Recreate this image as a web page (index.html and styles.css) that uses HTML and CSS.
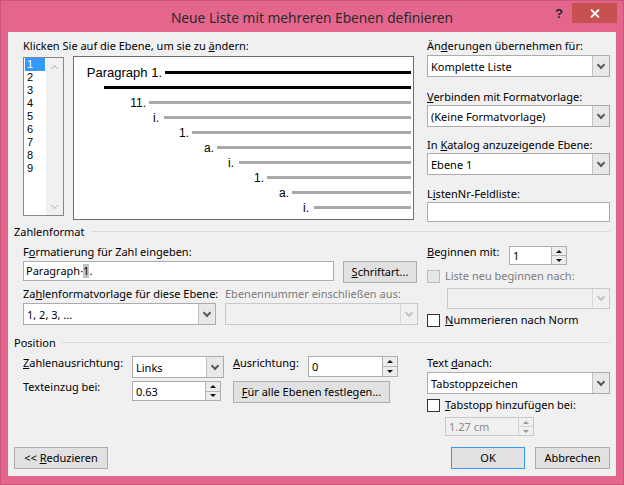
FILE: index.html
```html
<!DOCTYPE html>
<html lang="de">
<head>
<meta charset="utf-8">
<title>Neue Liste mit mehreren Ebenen definieren</title>
<link rel="stylesheet" href="styles.css">
</head>
<body>
<div class="window">
  <header class="titlebar">
    <div class="tb-spacer"></div>
    <div class="title">Neue Liste mit mehreren Ebenen definieren</div>
    <div class="tb-buttons">
      <span class="help">?</span>
      <span class="close"><svg width="10" height="9" viewBox="0 0 10 9"><path d="M1 0.5 L9 8.5 M9 0.5 L1 8.5" stroke="#fff" stroke-width="1.8" fill="none"/></svg></span>
    </div>
  </header>

  <main class="client">
    <section class="sec-top">
      <div class="top-left">
        <div class="lbl">Klicken Sie auf die Ebene, um sie zu <u>ä</u>ndern:</div>
        <div class="top-row">
          <div class="levels">
            <ul class="level-items">
              <li class="sel">1</li><li>2</li><li>3</li><li>4</li><li>5</li><li>6</li><li>7</li><li>8</li><li>9</li>
            </ul>
            <div class="vscroll">
              <span class="arr up"></span>
              <span class="arr down"></span>
            </div>
          </div>
          <div class="preview">
            <div class="prow p1"><span class="num">Paragraph 1.</span><span class="ln dark"></span></div>
            <div class="prow p2"><span class="num"></span><span class="ln dark"></span></div>
            <div class="prow p3"><span class="num">11.</span><span class="ln"></span></div>
            <div class="prow p4"><span class="num">i.</span><span class="ln"></span></div>
            <div class="prow p5"><span class="num">1.</span><span class="ln"></span></div>
            <div class="prow p6"><span class="num">a.</span><span class="ln"></span></div>
            <div class="prow p7"><span class="num">i.</span><span class="ln"></span></div>
            <div class="prow p8"><span class="num">1.</span><span class="ln"></span></div>
            <div class="prow p9"><span class="num">a.</span><span class="ln"></span></div>
            <div class="prow p10"><span class="num">i.</span><span class="ln"></span></div>
          </div>
        </div>
      </div>

      <div class="top-right">
        <div class="lbl">Än<u>d</u>erungen übernehmen für:</div>
        <div class="combo gap-after-label-2"><span class="val">Komplette Liste</span><span class="drop"></span></div>
        <div class="lbl gap-13"><u>V</u>erbinden mit Formatvorlage:</div>
        <div class="combo gap-after-label"><span class="val">(Keine Formatvorlage)</span><span class="drop"></span></div>
        <div class="lbl gap-11">In <u>K</u>atalog anzuzeigende Ebene:</div>
        <div class="combo gap-after-label"><span class="val">Ebene 1</span><span class="drop"></span></div>
        <div class="lbl gap-12">L<u>i</u>stenNr-Feldliste:</div>
        <div class="textbox tb-full gap-after-label"></div>
      </div>
    </section>

    <div class="group-head head-zf"><span class="gt">Zahlenformat</span><span class="rule"></span></div>

    <section class="sec-zf">
      <div class="zf-left">
        <div class="lbl gap-6">F<u>o</u>rmatierung für Zahl eingeben:</div>
        <div class="ctl-row gap-2">
          <div class="textbox tb-format"><span>Paragraph·</span><span class="field">1</span><span>.</span></div>
          <div class="btn btn-font"><span><u>S</u>chriftart...</span></div>
        </div>
        <div class="lbl-row gap-4">
          <span class="lbl lbl-style">Za<u>h</u>lenformatvorlage für diese Ebene:</span>
          <span class="lbl disabled-text">Ebenennummer einschließen aus:</span>
        </div>
        <div class="ctl-row gap-2">
          <div class="combo combo-style"><span class="val">1, 2, 3, ...</span><span class="drop"></span></div>
          <div class="combo combo-include disabled"><span class="val"></span><span class="drop"></span></div>
        </div>
      </div>

      <div class="zf-right">
        <div class="spin-row gap-6">
          <span class="lbl lbl-start"><u>B</u>eginnen mit:</span>
          <div class="spin spin-start"><span class="val">1</span><span class="sbtns"><span class="sb"><i class="tri up"></i></span><span class="sb"><i class="tri down"></i></span></span></div>
        </div>
        <div class="check-row gap-4">
          <span class="cb disabled"></span><span class="lbl cb-lbl disabled-text">Liste neu beginnen nach:</span>
        </div>
        <div class="combo combo-restart disabled"><span class="val"></span><span class="drop"></span></div>
        <div class="check-row gap-4">
          <span class="cb"></span><span class="lbl cb-lbl"><u>N</u>ummerieren nach Norm</span>
        </div>
      </div>
    </section>

    <div class="group-head head-pos"><span class="gt">Position</span><span class="rule"></span></div>

    <section class="sec-pos">
      <div class="pos-grid">
        <span class="lbl"><u>Z</u>ahlenausrichtung:</span>
        <div class="combo combo-align"><span class="val">Links</span><span class="drop"></span></div>
        <span class="lbl"><u>A</u>usrichtung:</span>
        <div class="spin spin-align"><span class="val">0</span><span class="sbtns"><span class="sb"><i class="tri up"></i></span><span class="sb"><i class="tri down"></i></span></span></div>

        <span class="lbl">Texteinzu<u>g</u> bei:</span>
        <div class="spin spin-indent"><span class="val">0.63</span><span class="sbtns"><span class="sb"><i class="tri up"></i></span><span class="sb"><i class="tri down"></i></span></span></div>
        <div class="btn btn-all"><span><u>F</u>ür alle Ebenen festlegen...</span></div>
      </div>

      <div class="pos-right">
        <div class="lbl gap-6">Text <u>d</u>anach:</div>
        <div class="combo gap-2"><span class="val">Tabstoppzeichen</span><span class="drop"></span></div>
        <div class="check-row gap-4">
          <span class="cb"></span><span class="lbl cb-lbl"><u>T</u>abstopp hinzufügen bei:</span>
        </div>
        <div class="spin spin-tab disabled"><span class="val">1.27 cm</span><span class="sbtns"><span class="sb"><i class="tri up"></i></span><span class="sb"><i class="tri down"></i></span></span></div>
      </div>
    </section>

    <footer class="footer">
      <div class="btn btn-less"><span>&lt;&lt; <u>R</u>eduzieren</span></div>
      <div class="btn btn-ok default"><span>OK</span></div>
      <div class="btn btn-cancel"><span>Abbrechen</span></div>
    </footer>
  </main>
</div>
</body>
</html>
```

FILE: styles.css
```css
* { box-sizing: border-box; }
html, body { margin: 0; padding: 0; }
body {
  width: 624px;
  height: 485px;
  overflow: hidden;
  background: #e4668d;
  font-family: "Noto Sans", "Open Sans", sans-serif;
  font-size: 11px;
  color: #000;
}
u { text-decoration: underline; text-underline-offset: 1px; }

.window {
  width: 624px;
  height: 485px;
  border: 1px solid #c9577c;
  background: #e4668d;
  display: flex;
  flex-direction: column;
}

/* ---------- title bar ---------- */
.titlebar {
  height: 31px;
  flex: none;
  display: grid;
  grid-template-columns: 1fr auto 1fr;
  align-items: start;
}
.title {
  padding-top: 8px;
  font-size: 13.75px;
  line-height: 18px;
  color: #2b2b2b;
  white-space: nowrap;
}
.tb-buttons {
  display: flex;
  justify-content: flex-end;
  align-items: flex-start;
  padding-right: 6px;
}
.help {
  width: 26px;
  height: 20px;
  margin-top: 2px;
  display: flex;
  align-items: center;
  justify-content: center;
  font-family: "Liberation Sans", Arial, sans-serif;
  font-weight: bold;
  font-size: 13px;
  color: #262626;
}
.close {
  width: 45px;
  height: 20px;
  margin-top: 2px;
  background: #c75050;
  display: flex;
  align-items: center;
  justify-content: center;
}

/* ---------- client ---------- */
.client {
  margin: 0 7px;
  height: 444px;
  background: #f0f0f0;
  display: flex;
  flex-direction: column;
}

.lbl {
  display: block;
  height: 14px;
  line-height: 14px;
  white-space: nowrap;
}
.disabled-text { color: #7c7c7c; }

.gap-2 { margin-top: 2px; }
.gap-4 { margin-top: 4px; }
.gap-6 { margin-top: 6px; }
.gap-11 { margin-top: 11px; }
.gap-12 { margin-top: 12px; }
.gap-13 { margin-top: 13px; }
.gap-after-label { margin-top: 1px; }
.gap-after-label-2 { margin-top: 2px; }

/* ---------- controls ---------- */
.combo {
  display: flex;
  height: 22px;
  border: 1px solid #acacac;
  background: #fff;
}
.combo .val {
  flex: 1;
  padding: 1px 0 0 3px;
  display: flex;
  align-items: center;
  line-height: 14px;
  white-space: nowrap;
  overflow: hidden;
}
.combo .drop {
  width: 17px;
  flex: none;
  background: #e8e8e8;
  border-left: 1px solid #c3c3c3;
  display: flex;
  align-items: center;
  justify-content: center;
}
.combo .drop::after {
  content: "";
  width: 4px;
  height: 4px;
  border-right: 2px solid #5a5a5a;
  border-bottom: 2px solid #5a5a5a;
  transform: rotate(45deg);
  margin-top: -3px;
}
.combo.disabled { background: #f0f0f0; border-color: #cacaca; }
.combo.disabled .drop { background: #f0f0f0; border-left-color: #d8d8d8; }
.combo.disabled .drop::after { border-color: #c4c4c4; }

.textbox {
  height: 20px;
  border: 1px solid #abadb3;
  background: #fff;
  display: flex;
  align-items: center;
  padding-left: 2px;
  line-height: 14px;
  white-space: nowrap;
}
.tb-full { width: 183px; }
.tb-format { width: 311px; }
.textbox .field { background: #c3c3c3; }

.spin {
  display: flex;
  border: 1px solid #abadb3;
  background: #fff;
}
.spin .val {
  flex: 1;
  padding: 1px 0 0 3px;
  display: flex;
  align-items: center;
  line-height: 14px;
  white-space: nowrap;
}
.spin .sbtns {
  width: 15px;
  flex: none;
  display: flex;
  flex-direction: column;
  border-left: 1px solid #b5b5b5;
}
.spin .sb {
  flex: 1;
  display: flex;
  align-items: center;
  justify-content: center;
  background: #ececec;
}
.spin .sb + .sb { border-top: 1px solid #b5b5b5; }
.tri {
  display: block;
  width: 0;
  height: 0;
  border-left: 3px solid transparent;
  border-right: 3px solid transparent;
}
.tri.up { border-bottom: 3px solid #111; }
.tri.down { border-top: 3px solid #111; }
.spin.disabled { background: #f0f0f0; border-color: #c8c8c8; color: #8a8a8a; }
.spin.disabled .sbtns { border-left-color: #d4d4d4; }
.spin.disabled .sb { background: #f0f0f0; }
.spin.disabled .sb + .sb { border-top-color: #d4d4d4; }
.spin.disabled .tri.up { border-bottom-color: #9a9a9a; }
.spin.disabled .tri.down { border-top-color: #9a9a9a; }

.btn {
  height: 22px;
  border: 1px solid #adadad;
  background: #e1e1e1;
  display: flex;
  align-items: center;
  justify-content: center;
  line-height: 14px;
  white-space: nowrap;
}
.btn.default { border-color: #3399ff; }

.cb {
  width: 13px;
  height: 13px;
  flex: none;
  border: 1px solid #333;
  background: #fff;
}
.cb.disabled { border-color: #bcbcbc; background: #e6e6e6; }

/* ---------- top section ---------- */
.sec-top {
  height: 190px;
  flex: none;
  display: flex;
  padding: 7px 0 0 15px;
}
.top-left { width: 391px; }
.top-right { width: 183px; margin-left: 13px; }
.top-row {
  display: flex;
  align-items: flex-start;
  gap: 9px;
  margin-top: 3px;
}
.levels {
  width: 41px;
  height: 159px;
  margin-top: 1px;
  border: 1px solid #828790;
  background: #fff;
  display: flex;
}
.level-items {
  list-style: none;
  margin: 0;
  padding: 0 1px;
  width: 22px;
}
.level-items li {
  height: 13px;
  line-height: 13px;
  padding-left: 2px;
  font-family: "Liberation Sans", Arial, sans-serif;
  font-size: 11px;
}
.level-items li.sel { background: #3399ff; color: #fff; }
.vscroll {
  width: 17px;
  background: #f0f0f0;
  display: flex;
  flex-direction: column;
  justify-content: space-between;
}
.vscroll .arr {
  height: 17px;
  display: flex;
  align-items: center;
  justify-content: center;
}
.vscroll .arr::after {
  content: "";
  width: 4px;
  height: 4px;
  border-right: 1.5px solid #c2c2c2;
  border-bottom: 1.5px solid #c2c2c2;
}
.vscroll .arr.up::after { transform: rotate(225deg); margin-top: 3px; }
.vscroll .arr.down::after { transform: rotate(45deg); margin-top: -3px; }

.preview {
  width: 341px;
  height: 164px;
  border: 1px solid #6e6e6e;
  background: #fff;
  padding: 8px 2px 0 0;
}
.prow {
  display: flex;
  align-items: center;
  height: 15px;
}
.prow .num {
  flex: none;
  text-align: right;
  padding-right: 3px;
  font-family: "Liberation Sans", Arial, sans-serif;
  font-size: 12px;
  white-space: nowrap;
}
.prow .ln { flex: 1; height: 3px; background: #a9a9a9; }
.prow .ln.dark { background: #000; }
.p1 .num { width: 91px; font-size: 13px; }
.p2 .num { width: 30px; }
.p3 .num { width: 75px; }
.p4 .num { width: 90px; padding-right: 5px; }
.p5 .num { width: 118px; }
.p6 .num { width: 143px; }
.p7 .num { width: 165px; padding-right: 5px; }
.p8 .num { width: 193px; }
.p9 .num { width: 218px; }
.p10 .num { width: 240px; padding-right: 5px; }

/* ---------- group headers ---------- */
.group-head {
  flex: none;
  height: 14px;
  display: flex;
  align-items: flex-start;
  padding: 0 6px;
}
.group-head .gt { line-height: 14px; white-space: nowrap; }
.group-head .rule {
  flex: 1;
  height: 1px;
  margin: 6px 0 0 6px;
  background: #dcdcdc;
}
.head-zf { margin-top: 3px; }
.head-pos { margin-top: 9px; }

/* ---------- Zahlenformat ---------- */
.sec-zf {
  height: 88px;
  flex: none;
  display: flex;
  padding-left: 15px;
}
.zf-left { width: 395px; }
.zf-right { width: 183px; margin-left: 9px; }
.ctl-row { display: flex; align-items: flex-start; }
.btn-font { width: 74px; margin-left: 9px; }
.lbl-row { display: flex; }
.lbl-style { width: 202px; }
.combo-style { width: 193px; }
.combo-include { width: 193px; margin-left: 9px; }

.spin-row { display: flex; align-items: flex-start; }
.lbl-start { width: 82px; }
.spin-start { width: 58px; height: 19px; margin-top: 1px; }
.check-row {
  display: flex;
  align-items: center;
  height: 14px;
}
.cb-lbl { margin-left: 5px; }
.combo-restart { width: 163px; height: 21px; margin: 5px 0 0 20px; }

/* ---------- Position ---------- */
.sec-pos {
  height: 86px;
  flex: none;
  display: flex;
  padding-left: 15px;
}
.pos-grid {
  display: grid;
  grid-template-columns: 109px 101px 75px 90px;
  grid-template-rows: 22px 23px;
  row-gap: 2px;
  align-items: start;
  margin-top: 6px;
}
.combo-align { width: 92px; }
.spin-align { width: 90px; height: 21px; }
.spin-indent { width: 89px; height: 20px; margin-top: 1px; }
.btn-all { grid-column: 3 / span 2; width: 157px; margin-top: 1px; }
.pos-right { width: 183px; margin-left: 29px; }
.spin-tab { width: 89px; height: 19px; margin: 5px 0 0 18px; }

/* ---------- footer ---------- */
.footer {
  display: flex;
  margin-top: 11px;
  padding: 0 6px;
}
.btn-less { width: 94px; }
.btn-ok { width: 74px; margin-left: auto; }
.btn-cancel { width: 75px; margin-left: 10px; }
```
